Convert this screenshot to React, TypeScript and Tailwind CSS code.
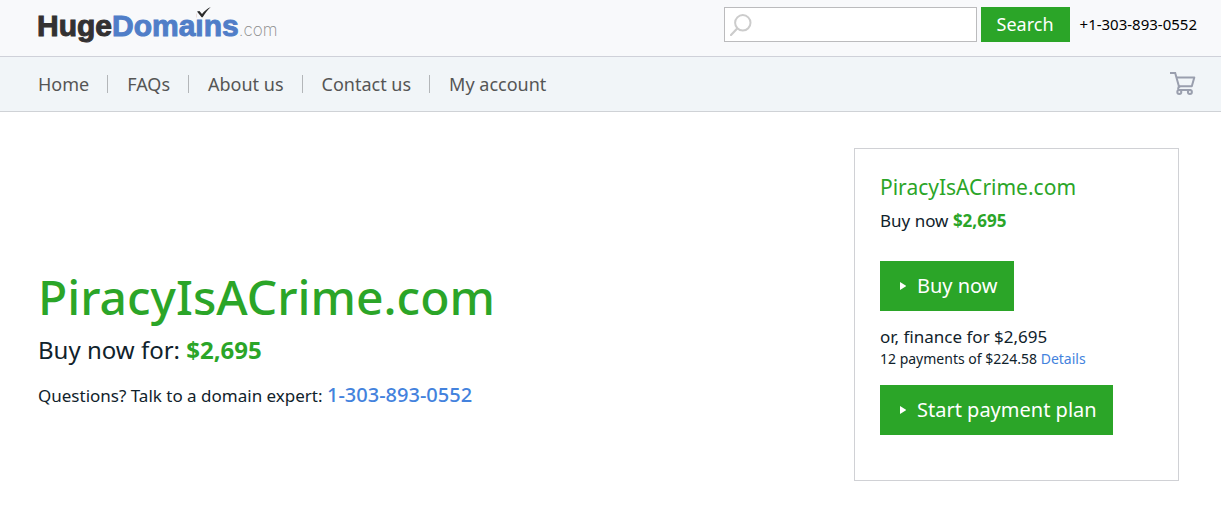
import { Fragment } from "react";

const navItems = ["Home", "FAQs", "About us", "Contact us", "My account"];

function Logo() {
  return (
    <a
      href="#home"
      aria-label="HugeDomains.com"
      className="mt-[2px] flex items-baseline font-['Liberation_Sans',Arial,sans-serif] text-[30px] leading-[34px] font-bold"
    >
      <span className="text-[#333132] [-webkit-text-stroke:1px_#333132]">Huge</span>
      <span className="relative text-[#507ec8] [-webkit-text-stroke:1px_#507ec8]">
        Domains
        <svg
          viewBox="0 0 14 11"
          className="absolute -top-[2px] right-[28px] h-[11px] w-[14px] bg-[#f8f9fb]"
          aria-hidden="true"
        >
          <path d="M0 4.6 2.4 4 5 7 C7.5 4 10.3 1.5 13.8 0 10.600 3 8 6.300 5.700 10.200 L4.600 10.200Z" fill="#2b2b2b" />
        </svg>
      </span>
      <span className="font-['Inter',sans-serif] text-[17px] font-extralight text-[#8a8a8a]">.com</span>
    </a>
  );
}

function SearchForm() {
  return (
    <form className="flex items-center gap-1" onSubmit={(e) => e.preventDefault()}>
      <div className="relative">
        <input
          type="search"
          aria-label="Search domains"
          className="block h-[35px] w-[253px] border border-[#bbbbbd] bg-white pr-2 pl-9 text-base outline-none"
        />
        <svg
          viewBox="0 0 22 22"
          fill="none"
          stroke="#cccccc"
          className="pointer-events-none absolute top-[7px] left-[6px] size-[22px]"
          aria-hidden="true"
        >
          <circle cx="12.800" cy="8.800" r="7.700" strokeWidth="2" />
          <path d="M7.200 14.600 1 21" strokeWidth="2.200" strokeLinecap="round" />
        </svg>
      </div>
      <button type="submit" className="h-[35px] bg-[#2ba528] px-4 text-[18px] text-white">
        Search
      </button>
    </form>
  );
}

function CartIcon() {
  return (
    <svg viewBox="0 0 26 24" fill="none" stroke="#9a9fae" strokeWidth="2" className="h-6 w-[26px]" aria-hidden="true">
      <path d="M0 2H5.200L9.300 16.800" />
      <path d="M6.500 6.500H24.300L21.800 15.300H9" strokeLinejoin="round" />
      <path d="M10 15.300C7.500 16 7.800 18.900 9.500 18.900H21" />
      <circle cx="9.300" cy="20.900" r="2" fill="#f1f5f8" />
      <circle cx="19.900" cy="20.900" r="2" fill="#f1f5f8" />
    </svg>
  );
}

function ActionButton({ label }: { label: string }) {
  return (
    <button type="button" className="flex h-[50px] items-center gap-[11px] bg-[#2ba528] pr-4 pl-5 text-[20px] text-white">
      <svg viewBox="0 0 6 8" className="h-2 w-[6px]" fill="white" aria-hidden="true">
        <path d="M0 0 6.500 4 0 8Z" />
      </svg>
      {label}
    </button>
  );
}

export default function App() {
  return (
    <div className="min-h-screen bg-white font-['Noto_Sans',sans-serif] text-[#10222b]">
      <header>
        <div className="flex h-[57px] items-start justify-between border-b border-[#cfd1d9] bg-[#f8f9fb] pt-[7px] pr-6 pl-[37px]">
          <Logo />
          <div className="flex items-center gap-[10px]">
            <SearchForm />
            <a href="tel:+13038930552" className="text-[15px] text-black">
              +1-303-893-0552
            </a>
          </div>
        </div>
        <div className="flex h-[55px] items-center justify-between border-b border-[#cfd2d6] bg-[#f1f5f8] pr-[25px] pl-[38px]">
          <nav className="flex items-center text-[18px] text-[#555555]">
            {navItems.map((item, i) => (
              <Fragment key={item}>
                {i > 0 && <span className="mr-[19px] ml-[18px] h-[18px] w-px bg-[#b3b6b9]" />}
                <a href="#nav">{item}</a>
              </Fragment>
            ))}
          </nav>
          <a href="#cart" aria-label="Cart" className="pb-[3px]">
            <CartIcon />
          </a>
        </div>
      </header>

      <main className="flex items-center justify-between gap-8 pt-9 pr-[42px] pb-[42px] pl-[38px]">
        <section className="pt-[50px]">
          <h1 className="text-[48px] leading-[60px] font-medium text-[#2ba528]">PiracyIsACrime.com</h1>
          <p className="mt-[5px] text-[24px] leading-9">
            Buy now for: <strong className="font-bold text-[#2ba528]">$2,695</strong>
          </p>
          <p className="mt-[11px] text-[17px] leading-8">
            Questions? Talk to a domain expert:{" "}
            <a href="tel:13038930552" className="text-[20px] font-medium text-[#4382dd]">
              1-303-893-0552
            </a>
          </p>
        </section>

        <aside className="w-[325px] shrink-0 border border-[#d0d1d5] px-[25px] pt-[23px] pb-[45px]">
          <h2 className="text-[21px] leading-[30px] text-[#2ba528]">PiracyIsACrime.com</h2>
          <p className="mt-[5px] text-[17px] leading-7">
            Buy now <strong className="font-bold text-[#2ba528]">$2,695</strong>
          </p>
          <div className="mt-[26px]">
            <ActionButton label="Buy now" />
          </div>
          <p className="mt-[14px] text-[17px] leading-6">or, finance for $2,695</p>
          <p className="text-[14px] leading-5">
            12 payments of $224.58{" "}
            <a href="#details" className="text-[#4382dd]">
              Details
            </a>
          </p>
          <div className="mt-4">
            <ActionButton label="Start payment plan" />
          </div>
        </aside>
      </main>
    </div>
  );
}
